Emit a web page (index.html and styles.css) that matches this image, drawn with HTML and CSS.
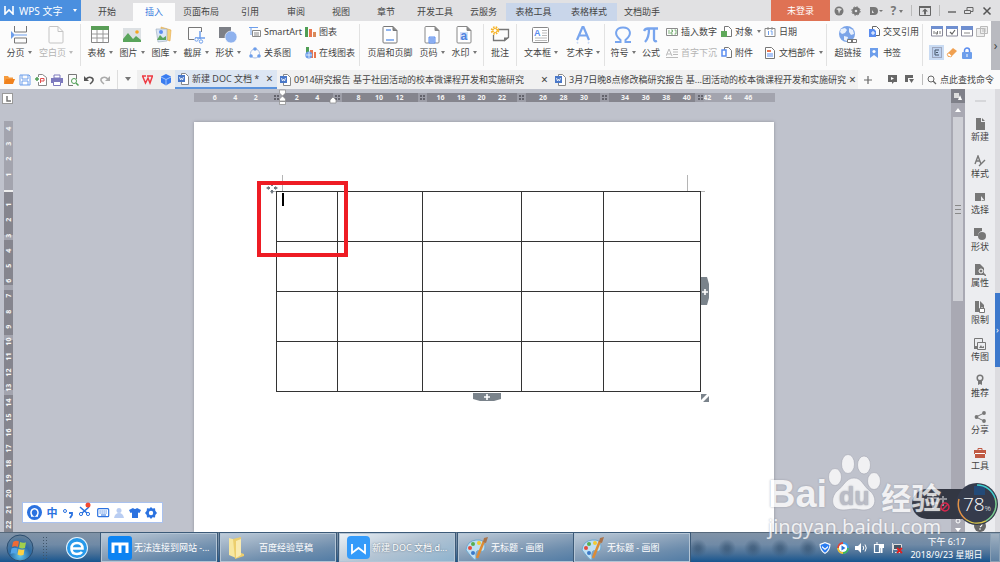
FILE: index.html
```html
<!DOCTYPE html>
<html lang="zh-CN">
<head>
<meta charset="utf-8">
<title>WPS 文字</title>
<link rel="stylesheet" href="styles.css">
</head>
<body>
<div class="app">
  <header class="titlebar">
    <button class="brand">
      <svg width="11" height="9" viewBox="0 0 11 9"><path d="M1 0v8l4-4 4 4V0" fill="none" stroke="#fff" stroke-width="1.6"/></svg>
      <span>WPS 文字</span><i class="caret"></i>
    </button>
    <nav class="menu">
      <button>开始</button><button class="active">插入</button><button>页面布局</button><button>引用</button><button>审阅</button><button>视图</button><button>章节</button><button>开发工具</button><button>云服务</button><button class="context">表格工具</button><button class="context">表格样式</button><button>文档助手</button>
    </nav>
    <button class="login">未登录</button>
    <div class="win">
      <button aria-label="皮肤"><svg width="10" height="10"><circle cx="5" cy="5" r="4.5" fill="#777"/><path d="M2 3l2 1 1 4 1-3 2-2-3-1z" fill="#ddd"/></svg></button>
      <button aria-label="设置"><svg width="10" height="10"><circle cx="5" cy="5" r="2.600" fill="none" stroke="#777" stroke-width="2.600"/><circle cx="5" cy="5" r="4.2" fill="none" stroke="#777" stroke-dasharray="1.6 1.7"/></svg></button>
      <button aria-label="文档"><svg width="14" height="10"><path d="M1 1h4a4 4 0 010 8H1zM3 4v3h2z" fill="#777" fill-rule="evenodd"/><path d="M10 4h4l-2 2z" fill="#777"/></svg></button>
      <button class="help">?<i class="caret"></i></button>
      <i class="bar"></i>
      <button aria-label="收起功能区"><svg width="12" height="12"><path d="M.5 1.5h11v9H.5z" fill="none" stroke="#666"/><path d="M0 1h12v2H0zM6 3.500l3 3H7v3H5v-3H3z" fill="#666"/></svg></button>
      <i class="bar"></i>
      <button aria-label="最小化"><svg width="10" height="10"><path d="M1 6h8" stroke="#555" stroke-width="1.300"/></svg></button>
      <button aria-label="还原"><svg width="10" height="10"><path d="M.5 4.500h6v3h-6zM3 4V1.500h6v4H7" fill="none" stroke="#666"/></svg></button>
      <button aria-label="关闭"><svg width="10" height="10"><path d="M1.500 1.500l7 7m0-7l-7 7" stroke="#555" stroke-width="1.500"/></svg></button>
    </div>
  </header>

  <section class="ribbon">
    <div class="group pad3">
      <button class="big"><svg width="18" height="20"><path d="M4.500 1v6h12V1M4.500 18v-5h12v5z" fill="none" stroke="#777"/><path d="M1 6l4 4-4 4z" fill="#6d9eeb"/><path d="M5 10h12" stroke="#6d9eeb"/></svg><span>分页<i class="caret"></i></span></button>
      <button class="big wide off"><svg width="16" height="20"><path d="M1 2.500Q1 1.500 2 1.500h8l5 5V17q0 1-1 1H2q-1 0-1-1zM10 1.500V6.500h5" fill="none" stroke="#c4c4c4"/></svg><span>空白页<i class="caret"></i></span></button>
    </div>
    <div class="group pad3">
      <button class="big"><svg width="18" height="20"><path d="M.5 1.500h17v16H.5z" fill="#fff" stroke="#888"/><path d="M0 1h18v4H0z" fill="#5a9e57"/><path d="M6 5v12M12 5v12M1 9h16M1 13h16" stroke="#9a9a9a"/></svg><span>表格<i class="caret"></i></span></button>
      <button class="big"><svg width="18" height="20"><path d="M0 3h18v14H0z" fill="#dde1e4"/><path d="M0 17v-3l5-6 5 6 3-3 5 4v2z" fill="#5aa55c"/><circle cx="14" cy="7" r="1.800" fill="#f5a623"/></svg><span>图片<i class="caret"></i></span></button>
      <button class="big"><svg width="18" height="20"><path d="M6 2l10 3-1 11-8-3z" fill="#f5d27a" stroke="#e5a84a" stroke-width=".6"/><path d="M1 4h11v12l-9 1z" fill="#dbe6f5" stroke="#9ab" stroke-width=".6"/><path d="M2 15l3-5 3 3 3-2v4z" fill="#5aa55c"/><circle cx="6" cy="7" r="2" fill="#5b8def"/></svg><span>图库<i class="caret"></i></span></button>
      <button class="big"><svg width="20" height="20"><path d="M15.500 7V2.500h-13v12H8" fill="none" stroke="#777"/><path d="M14 6v8M9 13h10" stroke="#6d9eeb" stroke-width="1.500"/><circle cx="10.500" cy="14.500" r="1.700" fill="#fff" stroke="#6d9eeb"/><circle cx="15" cy="16.500" r="1.700" fill="#fff" stroke="#6d9eeb"/></svg><span>截屏<i class="caret"></i></span></button>
      <button class="big"><svg width="18" height="20"><path d="M0 2h12v11H0z" fill="#7d8087"/><circle cx="12" cy="12" r="6" fill="#8fb2ee" stroke="#fff" stroke-width=".6"/></svg><span>形状<i class="caret"></i></span></button>
      <div class="small s-chart">
        <button><svg width="12" height="12"><path d="M0 1.500h9M2 1v8" stroke="#6d9eeb"/><path d="M3.500 4.500h8v6h-8zM5 7h5M5 9h5" fill="#fff" stroke="#888"/></svg>SmartArt</button>
        <button><svg width="11" height="12"><path d="M0 1h3v10H0z" fill="#4f9e55"/><path d="M4 3h3v8H4z" fill="#e9764f"/><path d="M8 6h3v5H8z" fill="#d98a5a"/></svg>图表</button>
        <button><svg width="12" height="12"><circle cx="6" cy="6.500" r="4.500" fill="none" stroke="#a9bfe6"/><circle cx="6" cy="2" r="1.800" fill="#6d9eeb"/><circle cx="2" cy="9" r="1.800" fill="#6d9eeb"/><circle cx="10" cy="9" r="1.800" fill="#6d9eeb"/></svg>关系图</button>
        <button><svg width="11" height="12"><path d="M1 0h3v6H1z" fill="#4f9e55"/><path d="M5 3h3v8H5zM9 5h2v6H9z" fill="#e9764f"/><circle cx="3.800" cy="8" r="3.500" fill="#6d9eeb"/><path d="M1 8h6M4 5v6" stroke="#fff" stroke-width=".7"/></svg>在线图表</button>
      </div>
    </div>
    <div class="group pad4">
      <button class="big xwide"><svg width="16" height="20"><path d="M1 2.500Q1 1.500 2 1.500h9l4 4V17q0 1-1 1H2q-1 0-1-1z" fill="#fff" stroke="#777"/><path d="M11 1.500v4h4" fill="#888" stroke="#777"/><path d="M4 5h5M4 15h8" stroke="#6d9eeb" stroke-width="1.500"/></svg><span>页眉和页脚</span></button>
      <button class="big"><svg width="16" height="20"><path d="M1 2.500Q1 1.500 2 1.500h9l4 4V17q0 1-1 1H2q-1 0-1-1z" fill="#fff" stroke="#888"/><path d="M11 1.500v4h4" fill="#888" stroke="#888"/><path d="M5 12h6v6H5z" fill="#bcd0f5" stroke="#5b8def"/><path d="M6 14h4M6 16h4" stroke="#5b8def"/></svg><span>页码<i class="caret"></i></span></button>
      <button class="big"><svg width="16" height="20"><path d="M1 2.500Q1 1.500 2 1.500h9l4 4V17q0 1-1 1H2q-1 0-1-1z" fill="#fff" stroke="#888"/><path d="M11 1.500v4h4" fill="#888" stroke="#888"/><path d="M4 7h8v8H4z" fill="#d3e0f8"/><text x="4.500" y="14.500" font-size="12" font-weight="bold" fill="#4f83e0">a</text></svg><span>水印<i class="caret"></i></span></button>
    </div>
    <div class="group">
      <button class="big"><svg width="20" height="20"><path d="M8 4.500h10.500v8l-4 3H3.500V10" fill="none" stroke="#777" stroke-width="1.300"/><path d="M19 12.500l-5 4v-4z" fill="#777"/><circle cx="5" cy="5.500" r="3" fill="none" stroke="#f7b52c" stroke-width="2.500" stroke-dasharray="1.400 1"/><circle cx="5" cy="5.500" r="2" fill="#fff" stroke="#f7b52c"/></svg><span>批注</span></button>
    </div>
    <div class="group pad3">
      <button class="big wide"><svg width="18" height="20"><rect x=".5" y="2.500" width="16" height="15" rx="1" fill="#fff" stroke="#888"/><text x="2" y="11" font-size="9" font-weight="bold" fill="#5b8def">A</text><path d="M10 5.500h5M10 8h5M10 10.500h5M3 13h12M3 15.500h12" stroke="#aaa" stroke-width=".8"/></svg><span>文本框<i class="caret"></i></span></button>
      <button class="big wide"><svg width="18" height="20"><path d="M3 15L8.500 2h1L15 15M5.500 10.500h7" fill="none" stroke="#78a5ee" stroke-width="2.200"/><path d="M3 17l1 1.500M15 17l-1 1.500" stroke="#c9dbf7" stroke-width="1.500"/></svg><span>艺术字<i class="caret"></i></span></button>
    </div>
    <div class="group pad2">
      <button class="big"><svg width="18" height="20"><path d="M1 17h5.500v-2C-1 9 2 2.500 9 2.500S19 9 11.500 15v2H17" fill="none" stroke="#78a5ee" stroke-width="2"/></svg><span>符号<i class="caret"></i></span></button>
      <button class="big narrow"><svg width="16" height="20"><path d="M1 6q1-2.500 4-2.500h10M6 4q0 9-4 13M11 4v10q0 3 3 2" fill="none" stroke="#78a5ee" stroke-width="2.300"/></svg><span>公式</span></button>
      <div class="small s-insert">
        <button><svg width="12" height="12"><path d="M.5 2.500h11v7H.5z" fill="#fff" stroke="#8a8a8a"/><path d="M3 4v4M5 4h1.500v2H5v2h2M8.500 4H10v4H8.500" fill="none" stroke="#5a9e57" stroke-width=".8"/></svg>插入数字</button>
        <button><svg width="11" height="12"><path d="M3.500 8V.500h4l3 3v7H6" fill="#fff" stroke="#777"/><path d="M0 5h6v6H0z" fill="#5fa85a"/></svg>对象<i class="caret"></i></button>
        <button><svg width="12" height="12"><path d="M1 2.500h10v8H1zM4 1v3M8 1v3" fill="#fff" stroke="#888"/><path d="M4.500 5v4M6.500 5h1.500v4" fill="none" stroke="#6d9eeb"/></svg>日期</button>
        <button class="off"><svg width="12" height="12"><path d="M0 9l3-7 3 7M1 7h4M7 2.500h5M7 5h5M7 7.500h5M0 10.500h12" fill="none" stroke="#bbb"/></svg>首字下沉</button>
        <button><svg width="11" height="12"><path d="M3.500 3V.500h4l3 3v7h-5" fill="#fff" stroke="#777"/><path d="M1 3h4v6H1z" fill="#fff" stroke="#5b8def" stroke-width="1.500"/></svg>附件</button>
        <button><svg width="12" height="12"><path d="M1.500.500h6l3 3v8h-9z" fill="#fff" stroke="#777"/><path d="M3 3h4v2H3z" fill="#e9764f"/><path d="M3 7h6M3 9h6" stroke="#5b8def" stroke-width="1.200"/></svg>文档部件<i class="caret"></i></button>
      </div>
    </div>
    <div class="group">
      <button class="big wide"><svg width="20" height="20"><circle cx="9" cy="9" r="8" fill="#7ba4e8"/><path d="M3 4l4-1 2 2-2 3-3 1-2-2zM11 3l4 2 1 4-3 1-2-3zM6 11l4 1-1 4-3-1z" fill="#e8f0fc"/><path d="M9.500 14.500h5v3h-5zM13.500 14.500h5v3h-5z" fill="#fff" stroke="#777"/></svg><span>超链接</span></button>
      <div class="small s-ref">
        <button><svg width="11" height="12"><path d="M3.500.500h4l3 3v6h-7z" fill="#fff" stroke="#666"/><path d="M0 3h5l2 2v6H0z" fill="#5b8def"/><path d="M2 7h4M4 5v4" stroke="#fff"/></svg>交叉引用</button>
        <button><svg width="11" height="12"><path d="M1 1h8v10L5 8l-4 3z" fill="#6d9eeb"/><circle cx="5" cy="4.500" r="1.600" fill="#fff"/></svg>书签</button>
      </div>
    </div>
    <div class="group controls">
      <button aria-label="文字型域"><svg width="12" height="11"><path d="M.5 1h11v9H.5z" fill="#fff" stroke="#889"/><path d="M0 0h12v3H0z" fill="#6f8fd0"/><path d="M3 5v3M5 6v2h1.500V5M9 5v3" stroke="#777" fill="none"/></svg></button>
      <button aria-label="复选框域"><svg width="12" height="11"><path d="M.5 1h11v9H.5z" fill="#fff" stroke="#889"/><path d="M0 0h12v3H0z" fill="#6f8fd0"/><path d="M4 6l2 2 3-4" stroke="#666" fill="none" stroke-width="1.200"/></svg></button>
      <button aria-label="下拉域"><svg width="12" height="11"><path d="M.5 1h11v9H.5z" fill="#fff" stroke="#889"/><path d="M0 0h12v4H0z" fill="#6f8fd0"/><path d="M3 7h6" stroke="#888"/></svg></button>
      <button aria-label="域选项"><svg width="12" height="11"><path d="M.5 2.500h8v8h-8zM4.500.500h7v7h-7z" fill="#eee" stroke="#bbb"/><path d="M6 3h4M6 5h4" stroke="#bbb"/></svg></button>
      <button class="on" aria-label="域底纹"><svg width="12" height="11"><path d="M1.500.500h9v10h-9z" fill="#bcd0ee" stroke="#778" stroke-dasharray="1 1"/><path d="M8 3H4v5h4M5 5.500h2" stroke="#456" fill="none"/></svg></button>
      <button aria-label="重置"><svg width="12" height="11"><path d="M1 7l6-6 4 3-6 6-3 0z" fill="#f0a050"/><path d="M3 6l3 3-1 1-3-1-1-2z" fill="#fff" stroke="#f0a050" stroke-width=".7"/></svg></button>
      <button aria-label="保护"><svg width="12" height="12"><path d="M3.500 6V3.500a2.500 2.500 0 015 0V6" fill="none" stroke="#5b8def" stroke-width="1.500"/><rect x="1" y="5" width="10" height="7" rx="1" fill="#6d9eeb"/><path d="M6 7v3" stroke="#fff"/></svg></button>
    </div>
    <button class="more">›</button>
  </section>

  <div class="tabbar">
    <div class="quick">
      <button aria-label="打开"><svg width="12" height="12"><path d="M1 10V2h4l1 1.500h4V5" fill="#f59a3c"/><path d="M1 10l2-5h9l-2 5z" fill="#f0821e"/></svg></button>
      <button aria-label="保存"><svg width="12" height="12"><path d="M1 1h9l1 1v9H1zM3 1v4h6V1M3 11V7h6v4" fill="#fff" stroke="#6d9eeb"/></svg></button>
      <button aria-label="输出为PDF"><svg width="12" height="12"><path d="M3.500 3V.500h4l4 3v8h-8V8" fill="#fff" stroke="#888"/><path d="M5.500 9V4.500H9V7H6" fill="none" stroke="#e04f4f"/><path d="M0 5h4M2 3v4" stroke="#4f9e55" stroke-width="1.500"/></svg></button>
      <button aria-label="打印"><svg width="12" height="12"><path d="M3 1h6v3H3z" fill="#fff" stroke="#7c79bd"/><path d="M0 4h12v5H0z" fill="#7c79bd"/><path d="M2.500 7.500h7v4h-7z" fill="#fff" stroke="#7c79bd"/></svg></button>
      <button aria-label="打印预览"><svg width="12" height="12"><path d="M9.500 5V.500h-8v11H6" fill="none" stroke="#777"/><circle cx="7" cy="7" r="2.500" fill="#fff" stroke="#4f9e55"/><path d="M9 9l2.500 2.500" stroke="#4f9e55" stroke-width="1.500"/></svg></button>
      <button aria-label="撤销"><svg width="12" height="12"><path d="M3 5q3-3 6-1t-2 6" fill="none" stroke="#555" stroke-width="1.600"/><path d="M1 2v5h5z" fill="#555"/></svg></button>
      <button aria-label="重做"><svg width="12" height="12"><path d="M9 5Q6 2 3 4t2 6" fill="none" stroke="#aaa" stroke-width="1.600"/><path d="M11 2v5H6z" fill="#aaa"/></svg></button>
    </div>
    <button class="qmore" aria-label="自定义"><i class="caret"></i></button>
    <div class="homes">
      <button aria-label="WPS"><svg width="12" height="10"><path d="M1 1h4M1.500 1l3 7L7 3l2 5 2.500-7M6 1h6" fill="none" stroke="#ee3a42" stroke-width="1.500"/></svg></button>
      <button aria-label="云"><svg width="12" height="12"><path d="M6 0l5 2.500v6L6 11.500 1 8.500v-6z" fill="#3b7df0"/><path d="M1 3l5 2.500L11 3M6 5.500v6" stroke="#bcd5ff" fill="none" stroke-width=".8"/></svg></button>
    </div>
    <div class="doc active"><svg width="11" height="12"><path d="M3.500.500h4l3 3v8h-7z" fill="#fff" stroke="#888"/><path d="M0 2h7v7H0z" fill="#4a78c8"/><path d="M1.500 4l1 3 1-2 1 2 1-3" stroke="#fff" fill="none" stroke-width=".8"/></svg><span>新建 DOC 文档 *</span><button aria-label="关闭">×</button></div>
    <div class="doc second"><svg width="11" height="12"><path d="M3.500.500h4l3 3v8h-7z" fill="#fff" stroke="#888"/><path d="M0 2h7v7H0z" fill="#4a78c8"/><path d="M1.500 4l1 3 1-2 1 2 1-3" stroke="#fff" fill="none" stroke-width=".8"/></svg><span>0914研究报告 基于社团活动的校本微课程开发和实施研究</span><button aria-label="关闭">×</button></div>
    <div class="doc third"><svg width="11" height="12"><path d="M3.500.500h4l3 3v8h-7z" fill="#fff" stroke="#888"/><path d="M0 2h7v7H0z" fill="#4a78c8"/><path d="M1.500 4l1 3 1-2 1 2 1-3" stroke="#fff" fill="none" stroke-width=".8"/></svg><span>3月7日晚8点修改稿研究报告 基...团活动的校本微课程开发和实施研究</span><button aria-label="关闭">×</button></div>
    <button class="plus" aria-label="新建"><svg width="10" height="10"><path d="M5 1v8M1 5h8" stroke="#666" stroke-width="1.200"/></svg></button>
    <div class="find">
      <button aria-label="演示"><svg width="9" height="9"><path d="M0 0h9v7H6l-2 2V7H0z" fill="#666"/><path d="M3 2l3 1.500L3 5z" fill="#fff"/></svg></button>
      <button aria-label="视图"><svg width="9" height="9"><path d="M0 0h8v3H3v4H0zM4 4h5L6.500 8z" fill="#666"/></svg></button>
      <i class="bar"></i>
      <button class="search"><svg width="10" height="10"><circle cx="4" cy="4" r="3" fill="none" stroke="#666"/><path d="M6 6l3 3" stroke="#666" stroke-width="1.300"/></svg>点此查找命令</button>
    </div>
  </div>

  <main class="work">
    <div class="vside">
      <button class="tabstop" aria-label="制表位"><svg width="10" height="10"><path d="M4 2v5h4" fill="none" stroke="#777" stroke-width="1.500"/></svg></button>
      <div class="vruler">
        <span>4</span><span>3</span><span>2</span><span>1</span><span class="edge"></span><span>1</span><span>2</span><span>3</span><span>4</span><span>5</span><span>6</span><span>7</span><span>8</span><span>9</span><span>10</span><span>11</span><span>12</span><span>13</span><span>14</span><span>15</span><span>16</span><span>17</span><span>18</span><span>19</span><span>20</span><span>21</span><span>22</span>
      </div>
    </div>
    <div class="canvas">
      <div class="hruler">
        <span>6</span><span>4</span><span>2</span><span></span><span>2</span><span>4</span><span></span><span>8</span><span>10</span><span>12</span><span></span><span>16</span><span>18</span><span>20</span><span>22</span><span></span><span>26</span><span>28</span><span>30</span><span></span><span>34</span><span>36</span><span>38</span><span>40</span><span>42</span><span>44</span><span>46</span>
        <svg class="marks" width="581" height="16">
          <g fill="#9d9ea8"><path d="M139 4h9v9h-9zM224 4h9v9h-9zM323 4h9v9h-9zM406 4h9v9h-9zM501 4h9v9h-9z"/></g>
          <g fill="#63636c"><path id="m" d="M80 6h2v2h-2zM83 6h2v2h-2zM80 9h2v2h-2zM83 9h2v2h-2z"/><use href="#m" x="61"/><use href="#m" x="146"/><use href="#m" x="245"/><use href="#m" x="328"/><use href="#m" x="424"/></g>
          <g fill="#fff" stroke="#888" stroke-width=".7"><path d="M85.500 1h6v3l-3 3-3-3zM88.500 7l3 3v2h-6v-2zM85.500 12.500h6v3h-6zM139 8l3 3v3h-6v-3z"/></g>
        </svg>
      </div>
      <article class="page">
        <div class="sheet">
          <table class="grid">
            <colgroup><col class="c1"><col class="c2"><col class="c3"><col class="c4"><col class="c5"></colgroup>
            <tr><td><i class="cursor"></i></td><td></td><td></td><td></td><td></td></tr>
            <tr><td></td><td></td><td></td><td></td><td></td></tr>
            <tr><td></td><td></td><td></td><td></td><td></td></tr>
            <tr><td></td><td></td><td></td><td></td><td></td></tr>
          </table>
          <svg class="crop" width="434" height="20"><path d="M11.500 2v16M416.500 2v16M0 18.500h5M430 18.500h4" stroke="#b5b5b5" fill="none"/></svg>
          <svg class="move" width="12" height="12"><path d="M6 0l2 3H4zM6 12l2-3H4zM0 6l3-2v4zM12 6L9 4v4z" fill="#6f7880"/><path d="M5 3h2v1H5zM5 8h2v1H5zM3 5h1v2H3zM8 5h1v2H8z" fill="#6f7880"/></svg>
          <div class="redbox"></div>
          <button class="addcol" aria-label="添加列"><svg width="8" height="28"><path d="M0 0h6l2 7v14l-2 7H0z" fill="#7a838b"/><path d="M4 12v6M1 15h6" stroke="#fff" stroke-width="1.600"/></svg></button>
          <button class="addrow" aria-label="添加行"><svg width="28" height="8"><path d="M0 0h28v6l-7 2H7l-7-2z" fill="#7a838b"/><path d="M14 1v6M11 4h6" stroke="#fff" stroke-width="1.600"/></svg></button>
          <svg class="resize" width="8" height="8"><path d="M0 0h6L0 6zM8 2v6H2z" fill="#7a838b"/></svg>
        </div>
      </article>
    </div>
    <div class="scroll">
      <button class="fit" aria-label="导航"><svg width="10" height="9"><path d="M1 1h5v5H1z" fill="#ddd"/><path d="M5 8l2-5 2 5z" fill="#fff"/></svg></button>
      <button class="up" aria-label="向上"><svg width="6" height="4"><path d="M0 4l3-4 3 4z" fill="#fff"/></svg></button>
      <div class="thumb"><i></i><i></i><i></i></div>
      <button class="down" aria-label="向下"><svg width="8" height="14"><circle cx="4" cy="3" r="2" fill="none" stroke="#fff"/><path d="M1 10h6l-3 4z" fill="#fff"/></svg></button>
    </div>
    <aside class="side">
      <i class="grip"></i>
      <button><svg width="12" height="12"><path d="M2 0h5v4h4v8H2zM8 0l3 3H8z" fill="#777"/></svg>新建</button>
      <button><svg width="12" height="12"><path d="M1 9l3-8 3 8M2 6h4M5 11l6-6" fill="none" stroke="#777" stroke-width="1.400"/></svg>样式</button>
      <button><svg width="12" height="12"><path d="M1 2h10v8H1z" fill="#777"/><path d="M7 5v5l2-1 2 1z" fill="#ecedf0"/></svg>选择</button>
      <button><svg width="12" height="12"><path d="M0 0h8v3a5 5 0 00-4 5H0z" fill="#777"/><circle cx="8" cy="8" r="4" fill="#777"/></svg>形状</button>
      <button><svg width="12" height="12"><path d="M1 0h5l4 4v7H1z" fill="#777"/><circle cx="7" cy="7" r="2" fill="#777" stroke="#fff"/><path d="M9 9l3 3" stroke="#777" stroke-width="1.500"/></svg>属性</button>
      <button><svg width="12" height="12"><path d="M1 0h4v11H1zM6 0l4 4v2H6z" fill="#777"/><path d="M5.500 7.500h5v4h-5zM6.500 7V6h3v1" fill="#fff" stroke="#777"/></svg>限制</button>
      <button><svg width="12" height="12"><path d="M.5 11V.500h8V4M3.500 4.500h8v7h-8z" fill="none" stroke="#777"/><path d="M5 10l2-3 1 2 2-1v2zM0 8h3v3H0z" fill="#777"/></svg>传图</button>
      <button><svg width="12" height="12"><circle cx="6" cy="4" r="2.800" fill="none" stroke="#777" stroke-width="1.500"/><path d="M4 7v4l2-1 2 1V7z" fill="#777"/></svg>推荐</button>
      <button><svg width="12" height="12"><path d="M10 2L2 6l8 4" fill="none" stroke="#777"/><circle cx="10" cy="2" r="1.900" fill="#777"/><circle cx="2.500" cy="6" r="1.900" fill="#777"/><circle cx="10" cy="10" r="1.900" fill="#777"/></svg>分享</button>
      <button><svg width="12" height="12"><path d="M4 3V1.500h4V3" fill="none" stroke="#c05a44"/><path d="M0 3h12v4H0zM1 7h10v4H1z" fill="#c05a44"/><path d="M1 6.500h10" stroke="#fff"/></svg>工具</button>
      <div class="sidehelp"><svg width="12" height="12"><circle cx="6" cy="6" r="6" fill="#666"/><path d="M4 4.500q0-2 2-2t2 1.700T6 7M6 8.200v1.500" fill="none" stroke="#fff" stroke-width="1.200"/></svg></div>
    </aside>
    <div class="strip"><button aria-label="展开">›</button></div>
  </main>

  <div class="ime">
    <svg width="15" height="15"><circle cx="7.500" cy="7.500" r="7.500" fill="#2b72e0"/><path d="M4 11h1.500a3.500 4 0 114 0H11" fill="none" stroke="#fff" stroke-width="1.500"/></svg>
    <b>中</b>
    <svg width="12" height="12"><circle cx="3" cy="4" r="1.500" fill="none" stroke="#2b72e0"/><path d="M7 6h3v2l-2 3" fill="none" stroke="#2b72e0" stroke-width="1.800"/></svg>
    <svg class="dot" width="14" height="16"><path d="M2 5l8 7M11 5l-8 7" stroke="#2b72e0" stroke-width="1.500"/><circle cx="3" cy="12" r="1.600" fill="#fff" stroke="#2b72e0"/><circle cx="10" cy="12" r="1.600" fill="#fff" stroke="#2b72e0"/><circle cx="10" cy="3" r="2.500" fill="#f4492f"/></svg>
    <svg width="13" height="12"><rect x=".7" y="1.700" width="11" height="8" rx="1" fill="none" stroke="#2b72e0" stroke-width="1.200"/><path d="M2.500 4h8M2.500 6h8" stroke="#2b72e0" stroke-dasharray="1.200 .8"/><path d="M4 8h5" stroke="#2b72e0"/></svg>
    <svg width="10" height="12"><circle cx="5" cy="3.500" r="2.500" fill="#b9cdf2"/><path d="M0 11q1-5 5-5t5 5z" fill="#b9cdf2"/></svg>
    <svg width="12" height="12"><path d="M0 3l4-2q2 2 4 0l4 2-1.500 3L9 5.500V11H3V5.500L1.500 6z" fill="#2b72e0"/></svg>
    <svg width="12" height="12"><path d="M6 0l1.500 1.500 2.500-.3.300 2.500L12 6l-1.700 2-.3 2.500-2.500-.2L6 12l-1.500-1.700-2.500.2L1.700 8 0 6l1.700-2.300L2 1.200l2.500.3z" fill="#2b72e0"/><circle cx="6" cy="6" r="2.200" fill="#fff"/></svg>
  </div>

  <footer class="taskbar">
    <button class="start" aria-label="开始"><svg width="30" height="30"><defs><radialGradient id="orb" cx=".5" cy=".8" r=".8"><stop offset="0" stop-color="#5fc5ee"/><stop offset=".5" stop-color="#2a6ba6"/><stop offset="1" stop-color="#6d8296"/></radialGradient></defs><circle cx="15" cy="15" r="13" fill="url(#orb)" stroke="#2a4d70"/><path d="M8 9q3-2 6-.5L13 14q-3-1.500-6 0z" fill="#ee6a35"/><path d="M15 9q3 1.500 6 .2L20 15q-3 1-6-.5z" fill="#a1cf4c"/><path d="M6.500 15.500q3-1.500 6 0L11.500 21q-3-1.500-6 0z" fill="#52a5e8"/><path d="M13.500 16q3 1.500 6 .3L18.500 22q-3 1.200-6-.5z" fill="#fbd144"/></svg></button>
    <i class="dots"></i>
    <button class="ie" aria-label="浏览器"><svg width="22" height="22"><circle cx="11" cy="11" r="11" fill="#e5f4ff"/><circle cx="11" cy="11" r="10" fill="#2799ea"/><path d="M6 11.500h10.500q0-5.500-5.500-5.500t-5.500 5.500 5.500 5.500q3.500 0 5-2" fill="none" stroke="#fff" stroke-width="2.600"/></svg></button>
    <div class="tasks">
      <button class="task"><svg width="24" height="24"><rect width="24" height="24" rx="3" fill="#0c83f2"/><path d="M5 17V8h14v9M12 9v8" fill="none" stroke="#fff" stroke-width="3"/></svg>无法连接到网站 -...</button>
      <button class="task"><svg width="24" height="24"><path d="M2 2l7 2v18l-7-3z" fill="#f7e7a0"/><path d="M6 3l8-2v16l3 1v2l-9 3z" fill="#ecce6d"/><path d="M9 5l5-2v16l-5 3z" fill="#f9eab0"/></svg>百度经验草稿</button>
      <button class="task current"><svg width="24" height="24"><rect x="1" width="23" height="23" rx="4" fill="#349bfa"/><path d="M6 8v9l6.500-5L19 17V8" fill="none" stroke="#fff" stroke-width="1.800"/></svg>新建 DOC 文档.d...</button>
      <button class="task paint"><svg width="24" height="24"><path d="M1 14Q2 5 11 4t9 6-5 5-4 6-10-7z" fill="#bfe0f4" stroke="#6fa8cf"/><circle cx="5" cy="12" r="2" fill="#e34b3d"/><circle cx="8" cy="8" r="2" fill="#58ad50"/><circle cx="14" cy="7" r="2" fill="#f3ca34"/><circle cx="8" cy="17" r="2" fill="#3b79c9"/><path d="M12 22L19 5" stroke="#dc8b35" stroke-width="2.500"/><path d="M18 6l1-4 4-1-2 6z" fill="#a8734b"/></svg>无标题 - 画图</button>
      <button class="task paint second"><svg width="24" height="24"><path d="M1 14Q2 5 11 4t9 6-5 5-4 6-10-7z" fill="#bfe0f4" stroke="#6fa8cf"/><circle cx="5" cy="12" r="2" fill="#e34b3d"/><circle cx="8" cy="8" r="2" fill="#58ad50"/><circle cx="14" cy="7" r="2" fill="#f3ca34"/><circle cx="8" cy="17" r="2" fill="#3b79c9"/><path d="M12 22L19 5" stroke="#dc8b35" stroke-width="2.500"/><path d="M18 6l1-4 4-1-2 6z" fill="#a8734b"/></svg>无标题 - 画图</button>
    </div>
    <div class="tray">
      <svg width="12" height="12"><path d="M6 0l5.500 2q0 7-5.500 10Q.500 9 .500 2z" fill="#fff"/><path d="M6 1.200L10.500 3q-.3 5-4.500 7.700Q1.800 8 1.500 3z" fill="#2c7df0"/><path d="M3 4l3 2.500L9 4v1.500L6 8 3 5.500z" fill="#fff"/></svg>
      <svg width="12" height="12"><circle cx="6" cy="6" r="5" fill="#fff" stroke="#3c9cf0" stroke-width="1.800"/><path d="M6 1a5 5 0 00-5 5" fill="none" stroke="#e6422f" stroke-width="1.800"/><path d="M1 6a5 5 0 005 5" fill="none" stroke="#f6c32e" stroke-width="1.800"/><path d="M11 6a5 5 0 01-5 5" fill="none" stroke="#42b84f" stroke-width="1.800"/><path d="M4.500 3.500L8.500 6l-4 2.500z" fill="#2673dc"/></svg>
      <svg width="12" height="12"><path d="M0 4h3l3-3v10L3 8H0z" fill="#fff"/><path d="M8 4q1.500 2 0 4M10 2.500q2.500 3.500 0 7" fill="none" stroke="#fff"/></svg>
      <svg width="12" height="12"><path d="M1.500 2.500h5v8h-5zM3 1h2" fill="none" stroke="#fff" stroke-width="1.200"/><path d="M6 2h5v4H9.500v5h-2V6H6z" fill="#fff"/></svg>
      <svg width="12" height="12"><path d="M2.500 2.500h8v5h-8zM4 10.500h5M1.500 1v10" fill="#456" stroke="#ddd"/><path d="M6 6l5 5m0-5l-5 5" stroke="#e01f1f" stroke-width="1.800"/></svg>
    </div>
    <time class="clock"><span>下午 6:17</span><span>2018/9/23 星期日</span></time>
    <button class="desk" aria-label="显示桌面"></button>
  </footer>

  <div class="meter">
    <div class="pill"><svg width="26" height="20"><path d="M2 4h12M3 9h10M8 1v14M15 5h7M18 2v10" stroke="#e8e8ec" stroke-width="2" opacity=".5"/><circle cx="20" cy="13" r="4" fill="none" stroke="#d8284f" stroke-width="1.500"/><path d="M17 16l6-6" stroke="#d8284f" stroke-width="1.500"/></svg></div>
    <div class="dial">
      <svg width="42" height="42"><circle cx="21" cy="21" r="21" fill="#353b4c"/><path d="M18 3h11v9H18z" fill="#234a78"/><g fill="none" stroke-width="1.500"><path d="M21 2a19 19 0 0118 13" stroke="#3fd0d0"/><path d="M39 15A19 19 0 0130 37.800" stroke="#7ccf90"/><path d="M30 37.800A19 19 0 0110 36.500" stroke="#d9c74a"/><path d="M10 36.500A19 19 0 013 16" stroke="#e39245"/></g></svg>
      <span>78<small>%</small></span>
    </div>
  </div>

  <div class="mark">
    <div class="logo">
      <span>Bai</span>
      <svg width="54" height="58"><g fill="#fff" stroke="#9da0ab" stroke-width=".6"><ellipse cx="8" cy="24" rx="6.500" ry="8.500"/><ellipse cx="21" cy="11" rx="6.500" ry="9.500"/><ellipse cx="37" cy="12" rx="6.500" ry="9"/><ellipse cx="47" cy="28" rx="6.500" ry="8.500"/><path d="M27 25c8 0 9 8 16 13 8 7 6 19-6 19-5 0-6-1-10-1s-6 1-11 1C4 57 3 45 10 38c7-5 9-13 17-13z"/></g><text x="12" y="52" font-size="25" font-weight="bold" fill="#b9bbc5">du</text></svg>
      <span class="cn">经验</span>
    </div>
    <div class="url">jingyan.baidu.com</div>
  </div>
</div>
</body>
</html>
```

FILE: styles.css
```css
* { box-sizing: border-box; }
body {
  margin: 0;
  font: 9px/12px "Noto Sans", "Noto Sans CJK SC", sans-serif;
  color: #444;
}
button {
  margin: 0;
  padding: 0;
  border: 0;
  background: none;
  font: inherit;
  color: inherit;
  white-space: nowrap;
}
svg { display: block; flex: none; font-family: "Liberation Sans", sans-serif; }
.app {
  position: relative;
  display: flex;
  flex-direction: column;
  height: 100vh;
  overflow: hidden;
}
.caret {
  display: inline-block;
  margin-left: 3px;
  border: 2px solid transparent;
  border-top: 3px solid #777;
  border-bottom: 0;
  vertical-align: 2px;
}
.off .caret { border-top-color: #bbb; }

.titlebar { display: flex; height: 21px; background: #e1e1e3; flex: none; }
.brand {
  display: flex;
  align-items: center;
  width: 81px;
  gap: 4px;
  padding-left: 4px;
  background: #4a8fdf;
  color: #fff;
  font-size: 10px;
}
.brand .caret { margin: 0 4px 0 auto; border-top-color: #fff; }
.menu {
  display: grid;
  grid-template-columns: 52px 42px 52px 46px 46px 44px 46px 52px 45px 55px 56px 50px;
  padding-top: 3px;
  flex: none;
}
.menu .active { background: #fcfcfc; color: #3c7fe0; }
.menu .context { background: #c9d6ea; }
.login { width: 59px; margin-left: auto; background: #df7254; color: #fff; }
.win { display: flex; align-items: center; justify-content: space-between; width: 170px; padding: 0 8px 0 4px; }
.help { font-size: 12px; font-weight: bold; color: #777; }
.bar { width: 1px; height: 11px; background: #bbb; }

.ribbon {
  display: grid;
  grid-template-columns: 81px 279px 124px 33px 88px 222px 96px 1fr 9px;
  height: 49px;
  background: #fcfcfc;
  flex: none;
}
.group { position: relative; display: flex; padding-top: 4px; }
.group:not(.controls)::after {
  content: "";
  position: absolute;
  right: 0;
  top: 3px;
  bottom: 4px;
  width: 1px;
  background: #e2e2e2;
}
.pad2 { padding-left: 2px; }
.pad3 { padding-left: 3px; }
.pad4 { padding-left: 4px; }
.big { display: flex; flex-direction: column; align-items: center; width: 32px; gap: 2px; height: 36px; flex: none; }
.big.wide { width: 42px; }
.big.xwide { width: 52px; }
.big.narrow { width: 24px; }
.off { color: #b4b4b4; }
.small { display: grid; grid-auto-rows: 21px; margin-top: -4px; }
.small button { display: flex; align-items: center; gap: 3px; }
.small .caret { margin-left: 1px; }
.s-chart { grid-template-columns: 56px auto; margin-left: 5px; }
.s-insert { grid-template-columns: 55px 43px auto; margin-left: 3px; }
.s-ref { grid-template-columns: auto; }
.controls {
  display: grid;
  grid-template-columns: repeat(4, 15px);
  grid-template-rows: 21px 21px;
  padding: 0 0 0 6px;
}
.controls button { display: grid; place-items: center; }
.controls .on { background: #c9dbf3; height: 15px; align-self: center; }
.more { background: #b9bac0; font-size: 12px; }

.tabbar { display: flex; align-items: stretch; height: 19px; background: #fafafa; flex: none; }
.quick { display: flex; width: 118px; gap: 4px; padding-left: 3px; border-right: 1px solid #ddd; }
.quick button { width: 12px; display: grid; place-items: center; }
.qmore { width: 19px; }
.qmore .caret { margin: 0; border-width: 4px 3px 0; }
.homes { display: flex; justify-content: space-around; align-items: center; width: 38px; background: #efefef; }
.doc { display: flex; align-items: center; gap: 3px; padding: 0 3px; background: #f1f1f1; white-space: nowrap; min-width: 0; }
.doc button { margin-left: auto; width: 9px; font-size: 12px; }
.doc.active { width: 102px; background: #dce6f3; border-bottom: 2px solid #5b93dc; }
.doc.second { width: 275px; }
.doc.third { width: 306px; }
.plus { width: 20px; display: grid; place-items: center; }
.find { display: flex; align-items: center; gap: 8px; margin-left: auto; padding-right: 6px; }
.search { display: flex; align-items: center; gap: 3px; }
.find .bar { margin-right: -4px; }

.work { display: flex; flex: 1; min-height: 0; background: #bfc2cc; }
.vside { display: flex; flex-direction: column; width: 17px; padding: 4px 2px 0; gap: 17px; }
.tabstop { width: 11px; height: 11px; background: #fff; border: 1px solid #999; flex: none; }
.vruler {
  display: grid;
  grid-auto-rows: 1fr;
  flex: 1;
  width: 9px;
  margin-left: 2px;
  font-size: 7px;
  font-weight: bold;
  color: #f5f5f5;
  background: linear-gradient(#a3a4ae 69px, #eee 69px 71px, #85858e 71px 114px, #a3a4ae 114px 119px, #85858e 119px 164px, #a3a4ae 164px 169px, #85858e 169px 214px, #a3a4ae 214px 219px, #85858e 219px 269px, #a3a4ae 269px 274px, #85858e 274px);
}
.vruler span { display: grid; place-items: center; min-height: 0; transform: rotate(-90deg); line-height: 9px; }
.canvas { display: flex; flex-direction: column; align-items: center; flex: 1; min-width: 0; padding-top: 4px; gap: 20px; overflow: hidden; }
.hruler {
  position: relative;
  display: grid;
  grid-template-columns: repeat(27, 1fr);
  width: 581px;
  padding: 0 16px 0 11px;
  height: 9px;
  flex: none;
  font-size: 7px;
  font-weight: bold;
  line-height: 9px;
  text-align: center;
  color: #f5f5f5;
  background: linear-gradient(90deg, #a3a4ae 88px, #85858e 88px 501px, #a3a4ae 501px);
}
.marks { position: absolute; left: 0; top: -4px; }
.page { flex: 1; width: 580px; padding: 69px 73px 0 82px; background: #fff; box-shadow: 0 0 3px #8e909a; }
.sheet { position: relative; }
.grid { width: 425px; table-layout: fixed; border-collapse: collapse; }
.grid td { height: 50px; padding: 0; border: 1px solid #333; vertical-align: top; }
.c1 { width: 61px; }
.c2 { width: 85px; }
.c3 { width: 99px; }
.c4 { width: 82px; }
.c5 { width: 97px; }
.cursor { display: block; width: 2px; height: 13px; margin: 1px 0 0 5px; background: #000; }
.crop { position: absolute; left: -5px; top: -18px; }
.move { position: absolute; left: -10px; top: -9px; }
.redbox { position: absolute; left: -19px; top: -10px; width: 91px; height: 76px; border: 4px solid #ee1c24; }
.addcol { position: absolute; right: -8px; top: 86px; }
.addrow { position: absolute; left: 197px; bottom: -9px; }
.resize { position: absolute; right: -8px; bottom: -10px; }
.scroll { display: flex; flex-direction: column; width: 14px; background: #a9a9b3; }
.fit { height: 14px; background: #7f8089; display: grid; place-items: center; }
.up { height: 14px; display: grid; place-items: center; }
.thumb { display: flex; flex-direction: column; justify-content: center; gap: 3px; width: 10px; height: 184px; margin-left: 2px; padding: 0 2px; background: #cfd0d6; }
.thumb i { height: 1px; background: #888; }
.down { display: grid; place-items: center; margin-top: auto; }
.side { display: flex; flex-direction: column; width: 30px; padding-top: 11px; background: #ecedf0; }
.side .grip { width: 11px; height: 2px; margin: 0 auto 16px; background: #d6d7da; }
.side button { display: flex; flex-direction: column; align-items: center; gap: 1px; flex: 1; }
.sidehelp { display: grid; justify-items: center; align-items: end; height: 48px; }
.strip { display: flex; align-items: center; width: 5px; padding-top: 39px; background: #dcdce0; }
.strip button { width: 5px; height: 74px; background: #3c78cc; color: #fff; }

.ime { position: absolute; left: 22px; bottom: 39px; display: flex; align-items: center; justify-content: space-between; width: 141px; height: 21px; padding: 0 5px 0 4px; background: #fff; border: 1px solid #a9c1ee; }
.ime b { font-size: 11px; color: #2b72e0; }
.ime .dot { margin-top: -5px; }

.taskbar {
  display: flex;
  align-items: center;
  height: 30px;
  flex: none;
  color: #fff;
  border-top: 1px solid #56697c;
  background:
    radial-gradient(circle at 698px 15px, #33506e99 2px, transparent 9px),
    radial-gradient(circle at 727px 15px, #33506e99 2px, transparent 9px),
    radial-gradient(circle at 753px 15px, #33506e99 2px, transparent 9px),
    radial-gradient(circle at 780px 15px, #33506e99 2px, transparent 9px),
    radial-gradient(circle at 808px 15px, #33506e99 2px, transparent 9px),
    linear-gradient(#8193a7, #708aa6 40%, #4a7198 70%, #17558f);
}
.start { width: 39px; display: grid; place-items: center; }
.dots { width: 7px; height: 24px; margin-left: 3px; background: radial-gradient(#40566b 1px, transparent 1px) 0 0 / 3px 3px; }
.ie { margin-left: 17px; }
.tasks { display: flex; align-self: stretch; gap: 3px; margin-left: 13px; }
.task {
  display: flex;
  align-items: center;
  gap: 2px;
  width: 116px;
  padding-left: 6px;
  border: 1px solid #b4c5d5;
  box-shadow: 0 0 0 1px #3c5a78;
  background: linear-gradient(170deg, #bccad8, #8ba2ba 45%, #6d8dad 70%, #527ca5);
}
.task.current { background: linear-gradient(160deg, #eaf0f5, #b4c4d3 50%, #8fb3ce); text-shadow: 0 0 2px #567; }
.task:nth-child(2) svg { margin-right: 6px; }
.task.second { margin-left: -3px; }
.tray { display: flex; gap: 6px; margin-left: auto; }
.clock { display: flex; flex-direction: column; align-items: center; width: 87px; line-height: 13px; }
.desk { width: 10px; height: 29px; border: 1px solid #8aa0b5; background: linear-gradient(#a1b1c1, #5e80a2); }

.meter { position: absolute; right: 2px; bottom: 37px; display: flex; align-items: center; width: 86px; height: 42px; }
.pill { display: grid; place-items: center; width: 60px; height: 30px; padding-right: 8px; border-radius: 15px 0 0 15px; background: #333743; }
.dial { position: absolute; right: 0; top: 0; width: 42px; height: 42px; color: #fff; }
.dial span { position: absolute; inset: 0; display: flex; align-items: baseline; justify-content: center; font: 300 19px/42px "Open Sans", "Noto Sans", sans-serif; }
.dial small { font-size: 8px; }

.mark { position: absolute; right: 54px; bottom: 23px; width: 178px; color: #fff; opacity: .78; text-shadow: 0 0 2px #8c8f9a; pointer-events: none; }
.logo { display: flex; align-items: flex-end; height: 60px; padding-bottom: 4px; font: bold 38px/34px "Liberation Sans", sans-serif; }
.logo .cn { font: bold 30px/30px "Noto Sans CJK SC", sans-serif; }
.url { font: 20px/24px "Noto Sans", sans-serif; }
```
